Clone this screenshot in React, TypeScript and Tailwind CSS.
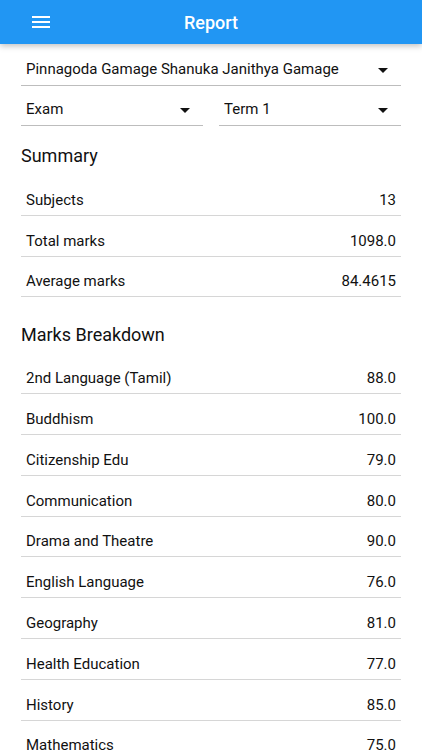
import React from 'react';

const font = { fontFamily: 'Roboto, "Noto Sans", sans-serif' };

const summary: [string, string][] = [
  ['Subjects', '13'],
  ['Total marks', '1098.0'],
  ['Average marks', '84.4615'],
];

const marks: [string, string][] = [
  ['2nd Language (Tamil)', '88.0'],
  ['Buddhism', '100.0'],
  ['Citizenship Edu', '79.0'],
  ['Communication', '80.0'],
  ['Drama and Theatre', '90.0'],
  ['English Language', '76.0'],
  ['Geography', '81.0'],
  ['Health Education', '77.0'],
  ['History', '85.0'],
  ['Mathematics', '75.0'],
];

function Caret() {
  return (
    <svg width="24" height="24" viewBox="0 0 24 24" className="shrink-0" aria-hidden="true">
      <path d="M7 10l5 5 5-5z" fill="#111" />
    </svg>
  );
}

function Dropdown({ value, className = '' }: { value: string; className?: string }) {
  return (
    <div className={`flex h-[32px] items-center justify-between border-b border-[#bdbdbd] pl-[5px] pr-[6px] ${className}`}>
      <span className="truncate text-[15px] text-[#111]">{value}</span>
      <Caret />
    </div>
  );
}

function Row({ label, value }: { label: string; value: string }) {
  return (
    <div className="flex h-[40.8px] items-end justify-between border-b border-[#d6d6d6] px-[5px] pb-[5px]">
      <span className="text-[15px] leading-[20px] text-[#111]">{label}</span>
      <span className="text-[15px] leading-[20px] text-[#111]">{value}</span>
    </div>
  );
}

export default function App() {
  return (
    <div className="h-[750px] overflow-hidden bg-white" style={font}>
      <header className="relative z-10 flex h-[44px] items-center bg-[#2196f3] shadow-[0_2px_6px_rgba(0,0,0,0.25)]">
        <div className="absolute left-[32px] top-[16px] flex w-[18px] flex-col gap-[3px]">
          <span className="h-[2px] bg-white" />
          <span className="h-[2px] bg-white" />
          <span className="h-[2px] bg-white" />
        </div>
        <h1 className="w-full text-center text-[18px] font-medium text-white">Report</h1>
      </header>

      <main className="px-[21px]">
        <Dropdown value="Pinnagoda Gamage Shanuka Janithya Gamage" className="mt-[10px]" />
        <div className="mt-[8px] flex gap-[16px]">
          <Dropdown value="Exam" className="flex-1" />
          <Dropdown value="Term 1" className="flex-1" />
        </div>

        <h2 className="mt-[18px] text-[18px] leading-[24px] text-[#111]">Summary</h2>
        <div className="mt-[7px]">
          {summary.map(([l, v]) => (
            <Row key={l} label={l} value={v} />
          ))}
        </div>

        <h2 className="mt-[26px] text-[18px] leading-[24px] text-[#111]">Marks Breakdown</h2>
        <div className="mt-[6px]">
          {marks.map(([l, v]) => (
            <Row key={l} label={l} value={v} />
          ))}
        </div>
      </main>
    </div>
  );
}
